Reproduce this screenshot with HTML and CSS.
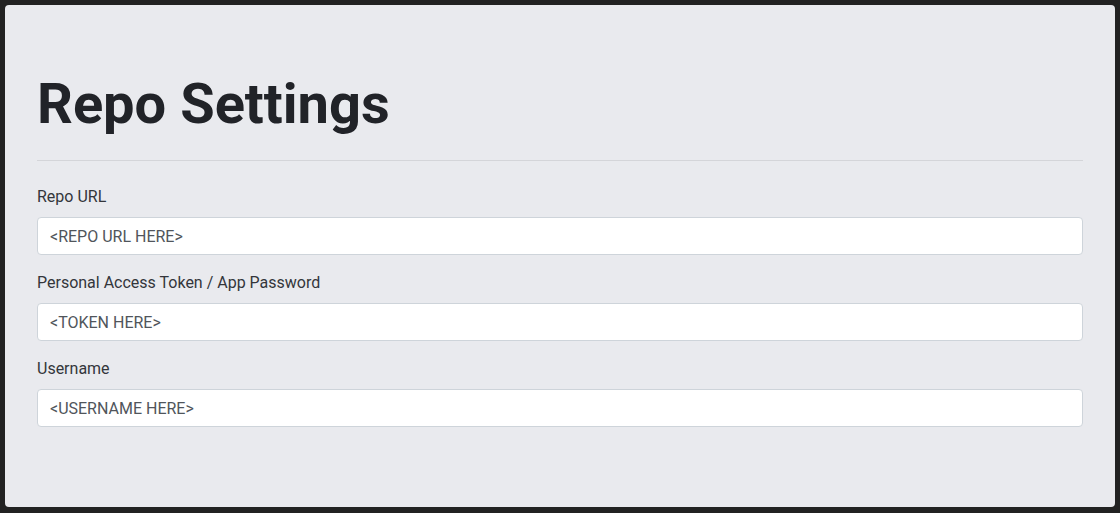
FILE: index.html
```
<!DOCTYPE html>
<html>
<head>
    <title>Repo Settings</title>
    <link rel="stylesheet" href="styles.css">
</head>
<body>
    <div class="panel">
        <h1>Repo Settings</h1>
        <hr>

        <div class="form-group">
            <label for="repoUrl">Repo URL</label>
            <input type="text" id="repoUrl" placeholder="<REPO URL HERE>">
        </div>
        <div class="form-group">
            <label for="repoToken">Personal Access Token / App Password</label>
            <input type="text" id="repoToken" placeholder="<TOKEN HERE>">
        </div>
        <div class="form-group">
            <label for="repoUser">Username</label>
            <input type="text" id="repoUser" placeholder="<USERNAME HERE>">
        </div>
    </div>
</body>
</html>
```

FILE: styles.css
```
html, body {
    margin: 0;
    height: 100%;
}

body {
    font-family: Roboto, "Liberation Sans", sans-serif;
    background-color: #222222;
    padding: 5px 5px 6px 5px;
    box-sizing: border-box;
}

.panel {
    background-color: #e9eaee;
    border-radius: 4px;
    padding: 66px 32px 48px 32px;
    height: 100%;
    box-sizing: border-box;
}

h1 {
    font-size: 56px;
    font-weight: 700;
    line-height: 1.2;
    color: #212328;
    margin: 0;
}

hr {
    border: none;
    border-top: 1px solid #d4d5d9;
    margin: 22px 0 24px 0;
}

.form-group {
    margin-bottom: 16px;
}

label {
    display: block;
    font-size: 16px;
    line-height: 24px;
    color: #33363b;
    margin-bottom: 8px;
}

input[type="text"] {
    display: block;
    width: 100%;
    height: 38px;
    padding: 6px 12px;
    font-family: inherit;
    font-size: 16px;
    color: #495057;
    background-color: white;
    border: 1px solid #ced4da;
    border-radius: 4px;
    box-sizing: border-box;
}

input::placeholder {
    color: #50555b;
    opacity: 1;
}
```
